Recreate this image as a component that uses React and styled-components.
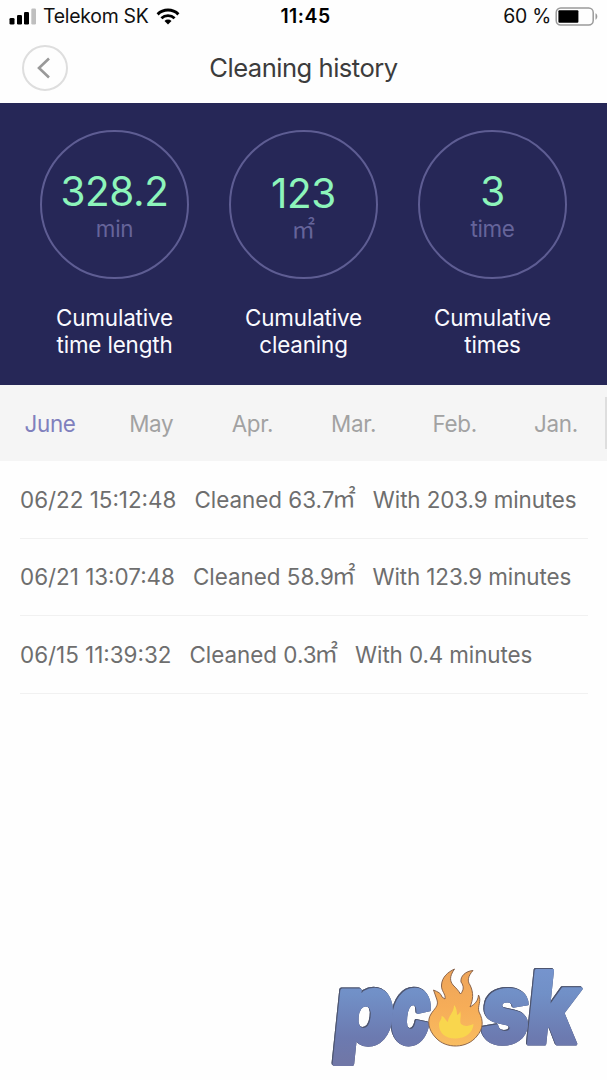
import React, { useState } from "react";
import styled, { createGlobalStyle } from "styled-components";

const GlobalStyle = createGlobalStyle`
  * {
    box-sizing: border-box;
  }

  body {
    margin: 0;
    background: #fefefe;
    font-family: Inter, "Noto Sans CJK SC", "Liberation Sans", sans-serif;
  }
`;

const Screen = styled.div`
  display: flex;
  flex-direction: column;
  height: 1080px;
  overflow: hidden;
`;

const StatusBar = styled.div`
  display: grid;
  grid-template-columns: 1fr auto 1fr;
  align-items: center;
  height: 32px;
  padding: 0 9px;
  color: #111;
  font-size: 19.4px;
`;

const StatusGroup = styled.div`
  display: flex;
  align-items: center;
  justify-content: ${(props) => (props.$end ? "flex-end" : "flex-start")};
  gap: ${(props) => (props.$end ? "4px" : "7px")};
  margin-right: ${(props) => (props.$end ? "-1px" : "0")};
  letter-spacing: -0.25px;
  white-space: nowrap;
`;

const Clock = styled.div`
  padding-left: 4px;
  color: #000;
  font-weight: 600;
  letter-spacing: 0.5px;
`;

const NavBar = styled.div`
  display: grid;
  grid-template-columns: 46px 1fr 46px;
  align-items: center;
  height: 71px;
  padding: 0 22px;
`;

const BackButton = styled.button`
  display: flex;
  align-items: center;
  justify-content: center;
  width: 46px;
  height: 46px;
  padding: 0 3px 0 0;
  border: 2px solid #dedede;
  border-radius: 50%;
  background: transparent;
`;

const Title = styled.h1`
  margin: 0;
  color: #3c3c3c;
  font-size: 25.6px;
  font-weight: 400;
  letter-spacing: -0.5px;
  text-align: center;
`;

const Summary = styled.div`
  display: grid;
  grid-template-columns: repeat(3, 1fr);
  height: 282px;
  padding: 27px 20px 0;
  background: #262757;
`;

const Stat = styled.div`
  display: flex;
  flex-direction: column;
  align-items: center;
`;

const Circle = styled.div`
  display: flex;
  flex-direction: column;
  align-items: center;
  width: 149px;
  height: 149px;
  padding-top: ${(props) => (props.$low ? "38px" : "36px")};
  border: 2px solid #5e5d93;
  border-radius: 50%;
`;

const Value = styled.div`
  color: #8df5bb;
  font-size: 40.4px;
  letter-spacing: -0.4px;
  line-height: 48px;
`;

const Unit = styled.div`
  margin-top: -1px;
  color: #65649a;
  font-size: 22.4px;
  letter-spacing: -0.3px;
  line-height: 27px;
`;

const Label = styled.div`
  width: 130px;
  margin-top: 25px;
  color: #fafaff;
  font-size: 22.4px;
  letter-spacing: -0.15px;
  line-height: 27px;
  text-align: center;
`;

const Metre = styled.span`
  margin: 0 -1px 0 -2px;
  font-family: "Noto Sans CJK SC", sans-serif;
  font-size: 23.5px;
  line-height: 0;
  vertical-align: 1px;
`;

const Months = styled.div`
  position: relative;
  display: grid;
  grid-template-columns: repeat(6, 1fr);
  height: 76px;
  background: #f5f5f5;

  &::after {
    content: "";
    position: absolute;
    top: 12px;
    right: 0;
    width: 2px;
    height: 52px;
    background: #dedede;
  }
`;

const Month = styled.button`
  padding: 0 1px 0 0;
  border: 0;
  background: transparent;
  color: ${(props) => (props.$active ? "#8080bd" : "#a2a2a2")};
  font-family: inherit;
  font-size: 22.4px;
  letter-spacing: -0.3px;
`;

const History = styled.div`
  display: flex;
  flex-direction: column;
  padding: 0 19px 0 20px;
`;

const Entry = styled.div`
  display: flex;
  align-items: center;
  gap: 18px;
  height: 77.5px;
  padding-top: 1px;
  border-bottom: 1.5px solid #f1f1f1;
  color: #6e6e6e;
  font-size: 22.4px;
  line-height: 28px;
  white-space: nowrap;
`;

const Minutes = styled.span`
  letter-spacing: -0.1px;
`;

const Footer = styled.div`
  display: flex;
  justify-content: flex-end;
  margin-top: auto;
  padding: 0 17px 3px 0;

  svg {
    display: block;
  }
`;

const Letters = styled.g`
  filter: drop-shadow(0.5px 0.5px 0 #4d5570)
    drop-shadow(-0.5px -0.5px 0 #4d5570);
`;

const LogoLetter = styled.text`
  font-family: Inter, sans-serif;
  font-size: 98px;
  font-weight: 900;
  stroke-linejoin: round;
`;

const stats = [
  { value: "328.2", unit: "min", label: "Cumulative time length" },
  { value: "123", unit: "㎡", label: "Cumulative cleaning" },
  { value: "3", unit: "time", label: "Cumulative times" },
];

const months = ["June", "May", "Apr.", "Mar.", "Feb.", "Jan."];

const entries = [
  { date: "06/22 15:12:48", area: "63.7", minutes: "203.9" },
  { date: "06/21 13:07:48", area: "58.9", minutes: "123.9" },
  { date: "06/15 11:39:32", area: "0.3", minutes: "0.4" },
];

const letters = [
  { char: "p", x: 2, sx: 0.93, sy: 1, weight: 4 },
  { char: "c", x: 58, sx: 0.68, sy: 1.01, weight: 3 },
  { char: "s", x: 148, sx: 0.86, sy: 1.02, weight: 1.5 },
  { char: "k", x: 194, sx: 0.87, sy: 1.03, weight: 3 },
];

const Signal = () => (
  <svg width="27" height="17" viewBox="0 0 27 17">
    <rect x="0.5" y="10" width="5" height="6.5" rx="1.3" />
    <rect x="8" y="7" width="5" height="9.5" rx="1.3" />
    <rect x="15" y="4" width="5" height="12.5" rx="1.3" />
    <rect x="22.3" y="0.5" width="4.7" height="16" rx="1.3" fill="#bfbfbf" />
  </svg>
);

const Wifi = () => (
  <svg width="24" height="17" viewBox="0 0 24 17" fill="none" stroke="#000">
    <path d="M1.6 6.3a15 15 0 0 1 20.8 0" strokeWidth="3" />
    <path d="M5.4 10.3a9.6 9.6 0 0 1 13.2 0" strokeWidth="2.8" />
    <path d="M12 16.5l-3.5-3.6a5 5 0 0 1 7 0z" fill="#000" stroke="none" />
  </svg>
);

const Battery = () => (
  <svg width="44" height="19" viewBox="0 0 44 19">
    <rect
      x="1.2"
      y="1"
      width="37"
      height="17"
      rx="4.5"
      fill="none"
      stroke="#9a9a9a"
      strokeWidth="1.5"
    />
    <rect x="3.4" y="3.3" width="20" height="12.4" rx="1" />
    <path d="M40.5 6.3c2.4 1 2.4 5.4 0 6.4z" fill="#9a9a9a" />
  </svg>
);

const Logo = () => (
  <svg width="260" height="140" viewBox="0 -27 260 140">
    <defs>
      <linearGradient
        id="letters"
        gradientUnits="userSpaceOnUse"
        x1="0"
        y1="-78"
        x2="0"
        y2="18"
      >
        <stop offset="0" stopColor="#7795cf" />
        <stop offset="0.3" stopColor="#7190c7" />
        <stop offset="0.75" stopColor="#6c7ab0" />
        <stop offset="1" stopColor="#7077a7" />
      </linearGradient>
      <linearGradient id="flame" x1="0" y1="0" x2="0" y2="1">
        <stop offset="0" stopColor="#eda45a" />
        <stop offset="0.5" stopColor="#f6ad58" />
        <stop offset="1" stopColor="#f9bd61" />
      </linearGradient>
    </defs>
    <Letters>
      {letters.map(({ char, x, sx, sy, weight }) => (
        <LogoLetter
          key={char}
          transform={`translate(${x} 79.5) skewX(-6) scale(${sx} ${sy})`}
          fill="url(#letters)"
          stroke="url(#letters)"
          strokeWidth={weight}
        >
          {char}
        </LogoLetter>
      ))}
    </Letters>
    <path
      d="M103.5 26C108 28 111 29 112 33L115 35C116 30 111 27 111.500 21C112 13 118 8 124.500 5C119 13 120 17 123 21C126 24 128 26 130.500 30C134 26 134 22 131 18C130 12 136 7 143 6.500C138 12 137 17 140 21C144 29 143 36 140 43C145 40 148 37 148.500 31C152 37 147 42 149 48C154 57 153 65 147 72C137 85 116 85 106 74C98 66 97 56 101 50C104 45 109 42 107 36Z"
      fill="url(#flame)"
      stroke="#805a43"
      strokeWidth="0.9"
    />
    <path
      d="M109 61C109 57 112 56 111.500 52C115 53 115 56 118 58C118 52 124 49 124 41C127 44 127 49 127 51C129 50 130 49 130 47C132 52 129 56 131 60C135 63 139 62 143.500 60C143 68 137 74 126 74.500C116 75 109 69 109 61Z"
      fill="#f9d64d"
    />
  </svg>
);

const App = () => {
  const [activeMonth, setActiveMonth] = useState("June");

  return (
    <Screen>
      <GlobalStyle />
      <StatusBar>
        <StatusGroup>
          <Signal />
          <span>Telekom SK</span>
          <Wifi />
        </StatusGroup>
        <Clock>11:45</Clock>
        <StatusGroup $end>
          <span>60 %</span>
          <Battery />
        </StatusGroup>
      </StatusBar>
      <NavBar>
        <BackButton aria-label="Back">
          <svg
            width="14"
            height="22"
            viewBox="0 0 14 22"
            fill="none"
            stroke="#999"
            strokeWidth="2.6"
          >
            <path d="M12 1.5L2 11l10 9.5" />
          </svg>
        </BackButton>
        <Title>Cleaning history</Title>
      </NavBar>
      <Summary>
        {stats.map((stat) => (
          <Stat key={stat.label}>
            <Circle $low={stat.unit === "㎡"}>
              <Value>{stat.value}</Value>
              <Unit>
                {stat.unit === "㎡" ? <Metre>{stat.unit}</Metre> : stat.unit}
              </Unit>
            </Circle>
            <Label>{stat.label}</Label>
          </Stat>
        ))}
      </Summary>
      <Months>
        {months.map((month) => (
          <Month
            key={month}
            $active={month === activeMonth}
            onClick={() => setActiveMonth(month)}
          >
            {month}
          </Month>
        ))}
      </Months>
      <History>
        {entries.map((entry) => (
          <Entry key={entry.date}>
            <span>{entry.date}</span>
            <span>
              Cleaned {entry.area}
              <Metre>㎡</Metre>
            </span>
            <Minutes>With {entry.minutes} minutes</Minutes>
          </Entry>
        ))}
      </History>
      <Footer>
        <Logo />
      </Footer>
    </Screen>
  );
};

export default App;
